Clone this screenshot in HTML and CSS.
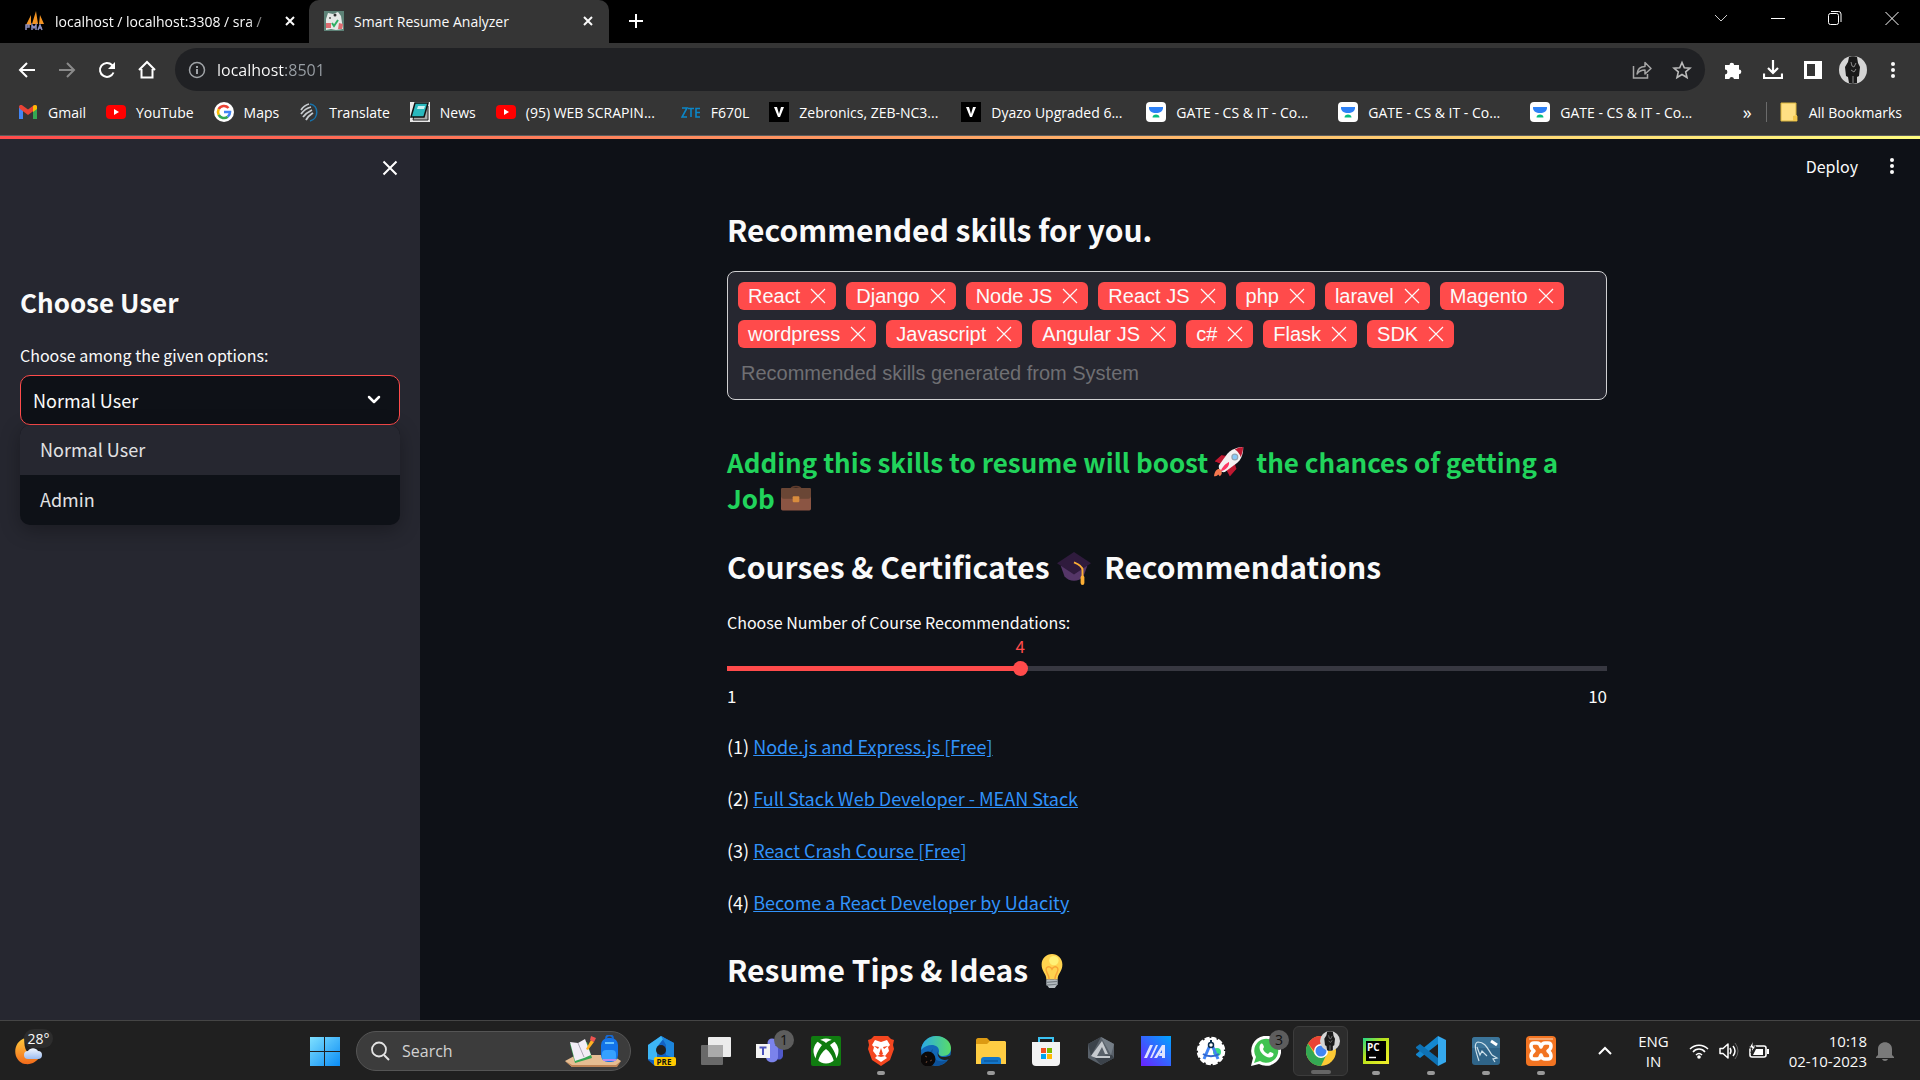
FILE: index.html
```html
<!DOCTYPE html>
<html lang="en">
<head>
<meta charset="utf-8">
<title>Smart Resume Analyzer</title>
<link rel="stylesheet" href="styles.css">
</head>
<body>
<svg class="defs" aria-hidden="true">
  <symbol id="x" viewBox="0 0 16 16"><path d="M1 1l14 14M15 1L1 15" fill="none" stroke="currentColor" stroke-width="1.200"/></symbol>
  <symbol id="dots" viewBox="0 0 20 20"><g fill="currentColor"><circle cx="10" cy="4" r="2"/><circle cx="10" cy="10" r="2"/><circle cx="10" cy="16" r="2"/></g></symbol>
  <symbol id="yt" viewBox="0 0 20 20"><rect y="3" width="20" height="14" rx="4" fill="#f00"/><path d="M8 7l5 3-5 3z" fill="#fff"/></symbol>
  <symbol id="vee" viewBox="0 0 20 20"><rect width="20" height="20" fill="#000"/><path d="M5 5h3l2 7 2-7h3l-4 10H9z" fill="#fff"/></symbol>
  <symbol id="gate" viewBox="0 0 20 20"><rect width="20" height="20" rx="4" fill="#fff"/><path d="M3 5h14v1c0 3-3 5-7 5S3 9 3 6z" fill="#2d81f7"/><path d="M6.500 15.500c0-2 1.500-3 3.500-3s3.500 1 3.500 3z" fill="#08bd80"/></symbol>
  <symbol id="photo" viewBox="0 0 28 28"><circle cx="14" cy="14" r="14" fill="#d5d5d5"/><path d="M10 1c2-1 6-1 8 0l1 6 2 4-1 9-2 1v6c-3 1-6 1-8 0l-1-6-2-1-1-9 3-5z" fill="#1a1a1a"/><path d="M12 6l1 4 2 1 2-4M12 14l3 2 2-3M14 20v7" stroke="#8a8a8a" fill="none"/></symbol>
</svg>

<header class="browser">
  <div class="tabs">
    <div class="tab">
      <svg class="i20" viewBox="0 0 20 20"><path d="M7 13L11 0l2 13zM1 14L6 4v10zM14 13l1-9 4 9z" fill="#f39322"/><path d="M1 19v-5h3v2H1M7 19v-5l2 3 2-3v5M13 19l2-5 2 5M14 17h3" stroke="#8d8fc0" stroke-width="1.500" fill="none"/></svg>
      <span class="tab-title fade">localhost / localhost:3308 / sra /</span>
      <button class="tab-close" aria-label="Close tab"><svg class="i12" viewBox="0 0 12 12"><path d="M2 2l8 8M10 2L2 10" stroke="currentColor" stroke-width="2"/></svg></button>
    </div>
    <div class="tab active">
      <svg class="i20" viewBox="0 0 20 20"><rect width="20" height="20" fill="#5d8277"/><path d="M4 2l5 1 5-2 3 4 2 13-7 1-5-1-5 1L2 8z" fill="#e6e9e7"/><path d="M2 12h5v5H2zM15 12l4 1-1 5h-4z" fill="#dd6b70"/><path d="M8 12l2 3 4-6" stroke="#2fae63" stroke-width="2" fill="none"/><circle cx="11" cy="4" r="1.500" fill="#333"/><circle cx="6" cy="7" r="1" fill="#555"/></svg>
      <span class="tab-title">Smart Resume Analyzer</span>
      <button class="tab-close" aria-label="Close tab"><svg class="i12" viewBox="0 0 12 12"><path d="M2 2l8 8M10 2L2 10" stroke="currentColor" stroke-width="2"/></svg></button>
    </div>
    <button class="newtab" aria-label="New tab"><svg class="i16" viewBox="0 0 16 16"><path d="M8 1v14M1 8h14" stroke="#fff" stroke-width="2"/></svg></button>
    <div class="window-controls">
      <button aria-label="Search tabs"><svg class="i16" viewBox="0 0 16 16"><path d="M2 5l6 6 6-6" stroke="#ccc" fill="none"/></svg></button>
      <button aria-label="Minimize"><svg class="i16" viewBox="0 0 16 16"><path d="M1 8.500h14" stroke="#fff"/></svg></button>
      <button aria-label="Restore"><svg class="i16" viewBox="0 0 16 16"><rect x="1.500" y="3.500" width="10" height="11" rx="2" stroke="#fff" fill="none"/><path d="M4 1.500h7.500a2.500 2.500 0 0 1 2.500 2.500v8" stroke="#fff" fill="none"/></svg></button>
      <button aria-label="Close"><svg class="i16" viewBox="0 0 16 16"><path d="M1.500 2l13 13M14.500 2l-13 13" stroke="#fff"/></svg></button>
    </div>
  </div>

  <div class="toolbar">
    <button class="tool" aria-label="Back"><svg class="i20" viewBox="0 0 20 20"><path d="M18 10H3M10 3l-7 7 7 7" stroke="#fff" stroke-width="2" fill="none"/></svg></button>
    <button class="tool" aria-label="Forward"><svg class="i20" viewBox="0 0 20 20"><path d="M2 10h15M10 3l7 7-7 7" stroke="#8a8a8a" stroke-width="2" fill="none"/></svg></button>
    <button class="tool" aria-label="Reload"><svg class="i20" viewBox="0 0 20 20"><path d="M16.500 12.500A7 7 0 1 1 15 5l1.500 1.500" stroke="#fff" stroke-width="2" fill="none"/><path d="M18 2v7h-7z" fill="#fff"/></svg></button>
    <button class="tool" aria-label="Home"><svg class="i20" viewBox="0 0 20 20"><path d="M2 10l8-8 8 8M4.500 9v8.500h11V9" stroke="#fff" stroke-width="2" fill="none"/></svg></button>
    <div class="omnibox">
      <svg class="i20" viewBox="0 0 20 20"><circle cx="10" cy="10" r="7.500" stroke="#a0a4a8" stroke-width="1.500" fill="none"/><path d="M10 9v5M10 6v2" stroke="#a0a4a8" stroke-width="2"/></svg>
      <input class="url" type="text" aria-label="Address" value="localhost:8501">
      <button class="tool" aria-label="Share"><svg class="i20" viewBox="0 0 20 20"><path d="M1.500 6v12h14v-4" stroke="#a6a6a6" stroke-width="1.500" fill="none"/><path d="M5 14c.5-5 3-7.500 8-7.500V2.500l6 6-6 5.500v-4c-4 0-6 1-8 4z" stroke="#a6a6a6" stroke-width="1.500" fill="none" stroke-linejoin="round"/></svg></button>
      <button class="tool" aria-label="Bookmark"><svg class="i20" viewBox="0 0 20 20"><path d="M10 2.500l2.300 5.200 5.700.5-4.300 3.700 1.300 5.600-5-3-5 3 1.300-5.600L2 8.200l5.700-.5z" stroke="#bbb" stroke-width="1.600" fill="none"/></svg></button>
    </div>
    <button class="tool" aria-label="Extensions"><svg class="i20" viewBox="0 0 20 20"><path d="M2 5h4.500a2.300 2.300 0 1 1 4.600 0H16v4.500a2.300 2.300 0 1 1 0 4.700V19h-5a2.400 2.400 0 0 0-4.700 0H2v-4.600a2.400 2.400 0 0 0 0-4.800z" fill="#fff"/></svg></button>
    <button class="tool" aria-label="Downloads"><svg class="i20" viewBox="0 0 20 20"><path d="M10 0v12M5 8l5 5 5-5M1 13.500V18h18v-4.500" stroke="#fff" stroke-width="2.200" fill="none"/></svg></button>
    <button class="tool" aria-label="Side panel"><svg class="i20" viewBox="0 0 20 20"><path d="M1 1h18v18H1zM4 4v12h8V4z" fill="#fff" fill-rule="evenodd"/></svg></button>
    <button class="tool" aria-label="Profile"><svg class="i28"><use href="#photo"/></svg></button>
    <button class="tool" aria-label="Menu"><svg class="i20"><use href="#dots"/></svg></button>
  </div>

  <nav class="bookmarks" aria-label="Bookmarks">
    <a href="#"><svg class="i20" viewBox="0 0 20 20"><path d="M1 17V5l4 3v9z" fill="#4285f4"/><path d="M15 17V8l4-3v12z" fill="#34a853"/><path d="M1 5c0-2 2-2.500 3.500-1.500L10 7.500l5.500-4C17 2.500 19 3 19 5l-1 2-8 6-8-6z" fill="#ea4335"/><path d="M15 4c2-2 4-1 4 1v2l-4 3z" fill="#fbbc04"/></svg>Gmail</a>
    <a href="#"><svg class="i20"><use href="#yt"/></svg>YouTube</a>
    <a href="#"><svg class="i20" viewBox="0 0 20 20"><circle cx="10" cy="10" r="10" fill="#fff"/><g fill="none" stroke-width="2.600"><path d="M14.500 6A6 6 0 0 0 4.700 7.200" stroke="#ea4335"/><path d="M4.700 7.200a6 6 0 0 0 0 5.600" stroke="#fbbc04"/><path d="M4.700 12.800a6 6 0 0 0 9 2" stroke="#34a853"/><path d="M13.700 14.800A6 6 0 0 0 16 10h-6" stroke="#4285f4"/></g></svg>Maps</a>
    <a href="#"><svg class="i20" viewBox="0 0 20 20"><path d="M11 2c9 1 9 15 0 17" stroke="#1673ad" stroke-width="1.500" fill="none"/><path d="M2 8c2-3 4-5 8-6M2 12c3-4 6-6 10-7M4 15c3-4 5-5 9-7M7 18c2-4 4-5 7-7" stroke="#c8ccd0" stroke-width="1.800" fill="none"/></svg>Translate</a>
    <a href="#"><svg class="i20" viewBox="0 0 20 20"><rect width="20" height="20" fill="#e9e9e9"/><path d="M6 4h12v14H3z" fill="#aaa" stroke="#222"/><path d="M5 1h13l-4 14H1z" fill="#29b8bd" stroke="#111" stroke-width="1.500"/><path d="M8 4h7l-1 3H7z" fill="#c9f2f2"/></svg>News</a>
    <a class="medium" href="#"><svg class="i20"><use href="#yt"/></svg>(95) WEB SCRAPIN...</a>
    <a href="#"><svg class="i20" viewBox="0 0 20 20"><path d="M1 6h5l-5 9h5M7 6.500h6M10 6.500V15M19 6.500h-4V15h4M15 10.500h4" stroke="#0b86c8" stroke-width="1.600" fill="none"/></svg>F670L</a>
    <a class="long" href="#"><svg class="i20"><use href="#vee"/></svg>Zebronics, ZEB-NC3...</a>
    <a class="medium" href="#"><svg class="i20"><use href="#vee"/></svg>Dyazo Upgraded 6...</a>
    <a class="long" href="#"><svg class="i20"><use href="#gate"/></svg>GATE - CS &amp; IT - Co...</a>
    <a class="long" href="#"><svg class="i20"><use href="#gate"/></svg>GATE - CS &amp; IT - Co...</a>
    <a class="long" href="#"><svg class="i20"><use href="#gate"/></svg>GATE - CS &amp; IT - Co...</a>
    <button class="more" aria-label="More bookmarks">»</button>
    <a class="all" href="#"><svg class="i20" viewBox="0 0 20 20"><path d="M2 1h15v12l1 1v5H2z" fill="#ffe083" stroke="#d9b43c"/><path d="M14 19v-5l4-1v6z" fill="#f3c74b"/></svg>All Bookmarks</a>
  </nav>
</header>

<div class="app">
  <aside class="sidebar">
    <button class="close-side" aria-label="Close sidebar"><svg class="i16" viewBox="0 0 16 16"><path d="M1.500 1.500l13 13M14.500 1.500l-13 13" stroke="#fff" stroke-width="2"/></svg></button>
    <h2>Choose User</h2>
    <label class="label" for="user">Choose among the given options:</label>
    <div class="select">
      <select id="user"><option>Normal User</option><option>Admin</option></select>
      <svg class="i16 caret" viewBox="0 0 16 16"><path d="M3 5l5 5 5-5" stroke="#fff" stroke-width="2.500" stroke-linecap="round" stroke-linejoin="round" fill="none"/></svg>
      <ul class="menu" role="listbox" aria-label="User">
        <li role="option" aria-selected="true">Normal User</li>
        <li role="option" aria-selected="false">Admin</li>
      </ul>
    </div>
  </aside>

  <main class="main">
    <div class="app-header">
      <button class="deploy">Deploy</button>
      <button class="kebab" aria-label="Main menu"><svg class="i20"><use href="#dots"/></svg></button>
    </div>
    <div class="content">
      <h3>Recommended skills for you.</h3>
      <div class="tags">
        <span class="tag">React<button aria-label="Remove React"><svg class="i16"><use href="#x"/></svg></button></span>
        <span class="tag">Django<button aria-label="Remove Django"><svg class="i16"><use href="#x"/></svg></button></span>
        <span class="tag">Node JS<button aria-label="Remove Node JS"><svg class="i16"><use href="#x"/></svg></button></span>
        <span class="tag">React JS<button aria-label="Remove React JS"><svg class="i16"><use href="#x"/></svg></button></span>
        <span class="tag">php<button aria-label="Remove php"><svg class="i16"><use href="#x"/></svg></button></span>
        <span class="tag">laravel<button aria-label="Remove laravel"><svg class="i16"><use href="#x"/></svg></button></span>
        <span class="tag">Magento<button aria-label="Remove Magento"><svg class="i16"><use href="#x"/></svg></button></span>
        <span class="tag">wordpress<button aria-label="Remove wordpress"><svg class="i16"><use href="#x"/></svg></button></span>
        <span class="tag">Javascript<button aria-label="Remove Javascript"><svg class="i16"><use href="#x"/></svg></button></span>
        <span class="tag">Angular JS<button aria-label="Remove Angular JS"><svg class="i16"><use href="#x"/></svg></button></span>
        <span class="tag">c#<button aria-label="Remove c#"><svg class="i16"><use href="#x"/></svg></button></span>
        <span class="tag">Flask<button aria-label="Remove Flask"><svg class="i16"><use href="#x"/></svg></button></span>
        <span class="tag">SDK<button aria-label="Remove SDK"><svg class="i16"><use href="#x"/></svg></button></span>
        <input class="tag-input" type="text" aria-label="Skills" placeholder="Recommended skills generated from System">
      </div>

      <h4 class="boost">Adding this skills to resume will boost<svg class="emoji" viewBox="0 0 36 36"><path d="M1 17l8-7 16 1 1 16-7 8s0-5-3-9-6-6-9-7-6-2-6-2z" fill="#a0041e"/><path d="M1 17l8-7 10 3-9 8zM19 35l8-9-4-9-8 11z" fill="#be1931"/><path d="M35 0S23 0 16 8L6 22s-1 3 1 6 6 2 6 2l15-11C36 12 35 0 35 0z" fill="#f4f1f2"/><path d="M35 0s-5 0-10 3c2 1 6 5 7 9 3-6 3-12 3-12z" fill="#be1931"/><circle cx="25" cy="12" r="3.500" fill="#88c9f9" stroke="#93a5b2" stroke-width="1.500"/><path d="M18 18s-7 3-10 11c6-1 11-6 10-11z" fill="#fc3663"/><path d="M8 27c-3-2-7 0-8 8 3 1 5-2 5-2l2 2c3-2 3-5 1-8z" fill="#f4784f"/></svg> the chances of getting a Job<svg class="emoji" viewBox="0 0 36 36"><path d="M12 8c0-5 12-5 12 0" stroke="#5e3b2c" stroke-width="2" fill="none"/><rect y="6" width="36" height="27" rx="2" fill="#8b5543"/><path d="M0 8c0-1 1-2 2-2h32c1 0 2 1 2 2v8c0 1-1 3-3 3H3c-2 0-3-2-3-3z" fill="#6a4635"/><rect x="14" y="16" width="8" height="7" rx="1" fill="#d98c3d"/></svg></h4>

      <h3>Courses &amp; Certificates<svg class="emoji big" viewBox="0 0 36 36"><path d="M4 16h28l-4 11c-5 6-15 6-20 0z" fill="#553668"/><path d="M18 1l18 12-18 12L0 13z" fill="#2f1b3d"/><path d="M18 12c5 2 9 4 9 8v7" stroke="#fdaf35" stroke-width="2" fill="none"/><rect x="25" y="26" width="4" height="10" rx="2" fill="#fdaf35"/></svg> Recommendations</h3>
      <label class="label" for="count">Choose Number of Course Recommendations:</label>
      <div class="slider">
        <output class="value" for="count">4</output>
        <input id="count" type="range" min="1" max="10" value="4">
        <div class="ticks"><span>1</span><span>10</span></div>
      </div>
      <p>(1) <a href="#">Node.js and Express.js [Free]</a></p>
      <p>(2) <a href="#">Full Stack Web Developer - MEAN Stack</a></p>
      <p>(3) <a href="#">React Crash Course [Free]</a></p>
      <p>(4) <a href="#">Become a React Developer by Udacity</a></p>
      <h3>Resume Tips &amp; Ideas<svg class="emoji big" viewBox="0 0 36 36"><path d="M29 11c0 8-5 9-5 16H12c0-7-5-8-5-16C7 5 12 0 18 0s11 5 11 11z" fill="#ffd34f"/><circle cx="20" cy="7" r="5" fill="#fff176"/><path d="M15 27c0-7-5-8-3-12 2-3 5-1 6 1 1-2 4-4 6-1 2 4-3 5-3 12" stroke="#f8a335" stroke-width="1.500" fill="none"/><path d="M12 27h12v5l-3 4h-6l-3-4z" fill="#b5bcc1"/><path d="M12 30l12-1M12 33l11-1" stroke="#777f85" stroke-width="1.200"/></svg></h3>
    </div>
  </main>
</div>

<footer class="taskbar">
  <button class="weather" aria-label="Weather">
    <svg class="i28" viewBox="0 0 28 28"><defs><linearGradient id="mn" x2="0" y2="1"><stop stop-color="#ffc93c"/><stop offset="1" stop-color="#f26a1b"/></linearGradient><linearGradient id="cl" x2="0" y2="1"><stop stop-color="#f2f7ff"/><stop offset="1" stop-color="#9cbdf0"/></linearGradient></defs><path d="M10 1C-3 5-3 24 10 27c7 1 12-3 14-6-9 1-17-9-14-20z" fill="url(#mn)"/><path d="M13 22a4 4 0 0 1 0-8 6 6 0 0 1 10 0 4 4 0 0 1 0 8z" fill="url(#cl)"/></svg>
    <span class="temp">28°</span>
  </button>
  <div class="apps">
    <button class="app-icon" aria-label="Start"><svg class="i30" viewBox="0 0 30 30"><defs><linearGradient id="wn" x2="1" y2="1"><stop stop-color="#7fe0ff"/><stop offset="1" stop-color="#0a8cf5"/></linearGradient></defs><path d="M0 1h14v14H0zM15 1h15v14H15zM0 16h14v14H0zM15 16h15v14H15z" fill="url(#wn)"/></svg></button>
    <div class="search">
      <svg class="i20" viewBox="0 0 20 20"><circle cx="9" cy="8.500" r="7" stroke="#e4e4e4" stroke-width="1.800" fill="none"/><path d="M14 14l5 5" stroke="#e4e4e4" stroke-width="2"/></svg>
      <input type="text" aria-label="Search" placeholder="Search">
      <svg class="study" viewBox="0 0 58 32"><path d="M1 26L12 20h36l9 6-5 6H8z" fill="#e5bd92"/><path d="M1 26l7 4h44l5-4-4 6H8z" fill="#bd8456"/><path d="M6 9l17-2 5 16-17 5z" fill="#35a653"/><path d="M6 7l8 1 7-4 6 16-7 3-9 3z" fill="#f2edf6"/><path d="M14 8l6 14" stroke="#aaa6b5"/><path d="M22 14l5-9 3 2-6 8z" fill="#ffb124"/><path d="M26 5l1-4 5 2-2 4z" fill="#ef5350"/><rect x="37" y="3" width="17" height="24" rx="7" fill="#1374ea"/><path d="M42 4c0-5 7-5 7 0" stroke="#1769d2" stroke-width="2" fill="none"/><path d="M41 8h9" stroke="#68c4ff" stroke-width="2"/><rect x="38" y="15" width="14" height="11" rx="4" fill="#36a1ff"/><path d="M39 25h13" stroke="#b48af2" stroke-width="2"/></svg>
    </div>
    <button class="app-icon" aria-label="Copilot preview"><svg class="i30" viewBox="0 0 30 30"><path d="M2 9L15 0l13 7v17l-9 6H9l-7-6z" fill="#1261c4"/><path d="M2 9L15 0l3 2-7 9v14L2 23z" fill="#3db6f5"/><path d="M15 0l13 7v15l-8-3V9z" fill="#1c85dc"/><circle cx="15" cy="14" r="5" fill="#202020"/><rect x="8" y="21" width="22" height="9" rx="2" fill="#ffc900"/></svg><span class="pre">PRE</span></button>
    <button class="app-icon" aria-label="Task view"><svg class="i30" viewBox="0 0 30 30"><rect x="7" y="1" width="23" height="20" rx="1" fill="#ececec"/><rect x="0" y="9" width="22" height="20" rx="1" fill="#777" fill-opacity=".85"/><path d="M7 9h15v12H7z" fill="#aaa"/></svg></button>
    <button class="app-icon" aria-label="Teams, 1 notification"><svg class="i30" viewBox="0 0 30 30"><circle cx="16" cy="7" r="4.500" fill="#7b83eb"/><path d="M21 10h6v10a4 4 0 0 1-6 3z" fill="#5059c9"/><path d="M10 10h12v11c0 7-12 7-12 0z" fill="#7b83eb"/><rect x="0" y="8" width="14" height="14" fill="#f4f4f4"/><path d="M3.500 11.500h7M7 11.500V19" stroke="#4b53bc" stroke-width="2"/></svg><span class="badge">1</span></button>
    <button class="app-icon" aria-label="Xbox"><svg class="i30" viewBox="0 0 30 30"><rect width="30" height="30" rx="2" fill="#107c10"/><circle cx="15" cy="15" r="12.500" fill="#fff"/><path d="M5 4c4-1 8 1 10 3 2-2 6-4 10-3-1 2-4 3-6 5 4 5 7 11 6 16l-2 1c-1-6-5-11-8-13-3 2-7 7-8 13l-2-1c-1-5 2-11 6-16-2-2-5-3-6-5z" fill="#107c10"/></svg></button>
    <button class="app-icon running" aria-label="Brave"><svg class="i30" viewBox="0 0 30 30"><path d="M8 0h14l3 3 3 1-1 5 1 4-4 11-9 6-9-6L2 13l1-4-1-5 3-1z" fill="#f4461f"/><path d="M9 4l6 2 6-2 3 5-2 2 1 4-4 5 2 2-6 4-6-4 2-2-4-5 1-4-2-2z" fill="#fff"/><path d="M8 10l5 1-1 2zM22 10l-5 1 1 2zM15 12l2 6-2 1-2-1zM11 20l4-2 4 2-4 1z" fill="#f4461f"/></svg></button>
    <button class="app-icon" aria-label="Edge"><svg class="i30" viewBox="0 0 30 30"><defs><linearGradient id="ed" x2="1"><stop stop-color="#29a9e8"/><stop offset="1" stop-color="#59dc68"/></linearGradient></defs><circle cx="15" cy="15" r="15" fill="#1268b8"/><path d="M0 14C1 5 8 0 15 0c9 0 15 6 15 12 0 5-3 8-8 8-4 0-5-2-4-4 1-8-11-10-18-2z" fill="url(#ed)"/><path d="M12 13c-3 8 4 15 14 11-2 3-6 6-11 6C7 28 6 17 12 13z" fill="#0d5199"/><path d="M17 15c-1 6 6 8 13 4l-2 4c-6 3-13-1-11-8z" fill="#202020"/><circle cx="7" cy="23" r="7.500" fill="#0b0808"/><path d="M4 20l2 1M9 25l2-1M5 27l1-2" stroke="#67412e"/></svg></button>
    <button class="app-icon running" aria-label="File Explorer"><svg class="i30" viewBox="0 0 30 30"><path d="M0 4c0-1 1-2 2-2h9l3 3h15v9H0z" fill="#dc9a13"/><path d="M0 8h11l3-3h15l1 1v22H0z" fill="#ffcd43"/><path d="M5 28v-4c0-2 1-3 3-3h14c2 0 3 1 3 3v4z" fill="#1376ca"/><path d="M8 25h14" stroke="#0a4c8b"/></svg></button>
    <button class="app-icon" aria-label="Microsoft Store"><svg class="i30" viewBox="0 0 30 30"><path d="M8 8V2h14v6" stroke="#3ac2f2" stroke-width="2" fill="none"/><path d="M1 6h28v20a4 4 0 0 1-4 4H5a4 4 0 0 1-4-4z" fill="#f3f3f3"/><path d="M10 12h5v5h-5z" fill="#f25022"/><path d="M16 12h5v5h-5z" fill="#7fba00"/><path d="M10 18h5v5h-5z" fill="#00a4ef"/><path d="M16 18h5v5h-5z" fill="#ffb900"/></svg></button>
    <button class="app-icon" aria-label="Armoury Crate"><svg class="i30" viewBox="0 0 30 30"><path d="M15 1l13 7v14l-13 7-13-7V8z" fill="#59616a"/><path d="M15 1L2 8l3 12zM15 29l13-7-2-3-18 2z" fill="#3c434b"/><path d="M15 1l13 7-3 11z" fill="#747d86"/><path d="M16 5L5 20l5 2h14v-2H11l5-9 3 7h3z" fill="#c5c9ce"/></svg></button>
    <button class="app-icon" aria-label="MyAsus"><svg class="i30" viewBox="0 0 30 30"><defs><linearGradient id="as" y1="1" x2="1" y2="0"><stop stop-color="#6a22ff"/><stop offset="1" stop-color="#00a5ff"/></linearGradient></defs><rect width="30" height="30" fill="url(#as)"/><path d="M3 22L9 9h3L6 22zM9 22l6-13h2l-6 13zM13 22l8-13h3l-8 13zM21 9h3v13h-3zM19 17h3v3h-4z" fill="#dfe3ff"/></svg></button>
    <button class="app-icon" aria-label="Android Studio"><svg class="i30" viewBox="0 0 30 30"><circle cx="15" cy="15" r="13" fill="#fff" stroke="#fff" stroke-width="2.500" stroke-dasharray="5 1.800"/><circle cx="21" cy="16" r="4" fill="#3ddc84"/><path d="M14 9L8 23M16 9l6 14" stroke="#4285f4" stroke-width="3"/><path d="M7 18c4 3 12 3 16 0" stroke="#3066cf" stroke-width="2" fill="none"/><circle cx="15" cy="9" r="2.500" fill="#fff" stroke="#0b2d4c" stroke-width="1.500"/><path d="M15 4v3" stroke="#0b2d4c" stroke-width="2"/></svg></button>
    <button class="app-icon" aria-label="WhatsApp, 3 notifications"><svg class="i30" viewBox="0 0 30 30"><path d="M0 30l2-8a15 15 0 1 1 6 6z" fill="#fff"/><path d="M3 27l2-6a12 12 0 1 1 4 4z" fill="#3fc351"/><path d="M9 9c2-3 3-1 4 2l-1 2c1 3 3 4 5 5l2-2c4 1 4 2 3 4-5 5-16-4-13-11z" fill="#fff"/></svg><span class="badge">3</span></button>
    <button class="app-icon current" aria-label="Chrome"><svg class="i30" viewBox="0 0 30 30"><circle cx="15" cy="15" r="15" fill="#fcc934"/><path d="M2 7.500A15 15 0 0 1 28 7.500H15l-5 10z" fill="#ea4335"/><path d="M2 7.500l7 11 11 1-5 10.500A15 15 0 0 1 2 7.500z" fill="#34a853"/><circle cx="15" cy="15" r="7" fill="#fff"/><circle cx="15" cy="15" r="5.500" fill="#4285f4"/></svg><svg class="badge-photo"><use href="#photo"/></svg></button>
    <button class="app-icon running" aria-label="PyCharm"><svg class="i30" viewBox="0 0 30 30"><defs><linearGradient id="pc" x2="1" y2="1"><stop stop-color="#21d789"/><stop offset=".4" stop-color="#b6e21c"/><stop offset="1" stop-color="#f5ee29"/></linearGradient></defs><rect x="2" y="2" width="26" height="26" fill="url(#pc)"/><rect x="5" y="5" width="20" height="20" fill="#000"/><path d="M8 21.500h7" stroke="#fff" stroke-width="1.500"/></svg><span class="pc">PC</span></button>
    <button class="app-icon running" aria-label="Visual Studio Code"><svg class="i30" viewBox="0 0 30 30"><path d="M22 0l8 4v22l-8 4z" fill="#35a9ee"/><path d="M22 0v8L4 22l-4-3v-1z" fill="#1487cf"/><path d="M22 30v-8L4 8l-4 3v1z" fill="#0e72b5"/></svg></button>
    <button class="app-icon running" aria-label="MySQL Workbench"><svg class="i30" viewBox="0 0 30 30"><rect x="1" y="1" width="28" height="28" rx="3" fill="#2f6488"/><path d="M1 4a3 3 0 0 1 3-3h22a3 3 0 0 1 3 3v8H1z" fill="#3b7499"/><path d="M8 25C5 16 2 7 7 6c8 0 10 8 14 13l5 3-4 1 2 3M6 11l3 8 2-4 5 5" stroke="#cde0ea" stroke-width="1.200" fill="none"/><path d="M20 5l6 4" stroke="#fff" stroke-width="3"/></svg></button>
    <button class="app-icon running" aria-label="XAMPP"><svg class="i30" viewBox="0 0 30 30"><rect width="30" height="30" rx="4" fill="#f27422"/><path d="M3 2h24v2H3z" fill="#f7a66e"/><path d="M8 7h3q3 0 4 4q1-4 4-4h3q3 0 3 3t-3 5q3 2 3 5t-3 3h-3q-3 0-4-4q-1 4-4 4H8q-3 0-3-3t3-5q-3-2-3-5t3-3z" stroke="#fff" stroke-width="3.500" fill="none" stroke-linejoin="round"/></svg></button>
  </div>
  <div class="tray">
    <button aria-label="Hidden icons"><svg class="i16" viewBox="0 0 16 16"><path d="M2 11l6-6 6 6" stroke="#fff" stroke-width="2" fill="none"/></svg></button>
    <button class="lang">ENG<br>IN</button>
    <button class="status" aria-label="Network, sound, battery">
      <svg class="i20" viewBox="0 0 20 20"><g fill="none" stroke="#fff" stroke-width="1.500"><path d="M1 8c5-5 13-5 18 0M4 11c3-4 9-4 12 0M7 14c2-2 4-2 6 0"/></g><circle cx="10" cy="16" r="1.800" fill="#fff"/></svg>
      <svg class="i20" viewBox="0 0 20 20"><path d="M1 7.500h3L9 3v14l-5-4.500H1z" fill="none" stroke="#fff" stroke-width="1.500" stroke-linejoin="round"/><path d="M11 7q2 3 0 6M14 5q4 5 0 10" fill="none" stroke="#fff" stroke-width="1.500"/><path d="M16 2q6 8 0 16" stroke="#666" fill="none"/></svg>
      <svg class="i20" viewBox="0 0 20 20"><rect x="1" y="5" width="16" height="11" rx="2" fill="none" stroke="#fff" stroke-width="1.600"/><path d="M7 8h7v6H4zM18 8h2v5h-2z" fill="#fff"/><path d="M4 0L0 7h3l-1 5 5-7H4z" fill="#fff" stroke="#202020"/></svg>
    </button>
    <time class="clock" datetime="2023-10-02T10:18">10:18<br>02-10-2023</time>
    <button aria-label="Notifications"><svg class="i20" viewBox="0 0 20 20"><path d="M3 14V8c0-9 14-9 14 0v6l2 2v1H1v-1z" fill="#7a7a7a"/><path d="M7 18h6c-1 2.500-5 2.500-6 0z" fill="#7a7a7a"/></svg></button>
  </div>
</footer>
</body>
</html>
```
FILE: styles.css
```css
* { box-sizing: border-box; }
:root {
  --sans: "Noto Sans CJK JP", "Noto Sans CJK SC", sans-serif;
  --ui: "Open Sans", "Noto Sans", sans-serif;
  --red: #ff4b4b;
  --panel: #262730;
  --bg: #0e1117;
}
body {
  margin: 0;
  height: 100vh;
  display: flex;
  flex-direction: column;
  overflow: hidden;
  background: var(--bg);
  color: #fafafa;
  font-family: var(--ui);
  font-size: 14px;
}
button {
  display: inline-flex;
  align-items: center;
  justify-content: center;
  padding: 0;
  border: 0;
  background: none;
  color: inherit;
  font: inherit;
}
input, select { font: inherit; color: inherit; outline: 0; border: 0; background: none; padding: 0; margin: 0; min-width: 0; }
svg { flex: none; display: block; }
.defs { position: absolute; width: 0; height: 0; }
.i12 { width: 12px; height: 12px; }
.i16 { width: 16px; height: 16px; }
.i20 { width: 20px; height: 20px; }
.i28 { width: 28px; height: 28px; }
.i30 { width: 30px; height: 30px; }

/* browser chrome */
.browser { flex: none; background: #353535; border-bottom: 1px solid #5c5c5c; }
.tabs { display: flex; height: 43px; background: #000; }
.tab { display: flex; align-items: center; width: 300px; padding: 0 15px 1px; gap: 10px; }
.tab:first-child { width: 309px; padding: 0 13px 1px 25px; }
.tab.active { background: #353535; border-radius: 10px 10px 0 0; }
.tab-title { flex: 1; white-space: nowrap; overflow: hidden; }
.tab-title.fade { -webkit-mask-image: linear-gradient(90deg, #000 88%, transparent); mask-image: linear-gradient(90deg, #000 88%, transparent); }
.newtab { width: 54px; padding-bottom: 1px; }
.window-controls { display: flex; margin-left: auto; height: 36px; }
.window-controls button { width: 57px; }

.toolbar { display: flex; align-items: center; padding: 5px 7px 0; }
.tool { width: 40px; height: 40px; }
.omnibox {
  flex: 1;
  display: flex;
  align-items: center;
  height: 43px;
  margin: 0 8px;
  padding: 0 3px 0 12px;
  border-radius: 22px;
  background: #202124;
}
.url {
  flex: 1;
  margin-left: 10px;
  height: 30px;
  font-size: 16px;
  color: transparent;
  background: linear-gradient(90deg, #fff 68px, #9aa0a6 68px);
  -webkit-background-clip: text;
  background-clip: text;
}
.bookmarks { display: flex; align-items: center; gap: 20px; height: 44px; padding: 0 18px 2px; white-space: nowrap; }
.bookmarks a { display: flex; align-items: center; gap: 10px; color: #fff; text-decoration: none; }
.bookmarks .medium { min-width: 165px; }
.bookmarks .long { min-width: 172px; }
.more { margin-left: auto; font-size: 18px; }
.bookmarks .all { border-left: 1px solid #6b6b6b; padding-left: 12px; margin-left: -6px; }

/* app */
.app {
  flex: 1;
  min-height: 0;
  display: flex;
  border-top: 3px solid;
  border-image: linear-gradient(90deg, #ff4b4b, #fffd80) 1;
  font-family: var(--sans);
  font-size: 18px;
}
.sidebar { width: 420px; flex: none; padding: 14px 20px; background: var(--panel); }
.close-side { display: flex; width: 20px; height: 30px; margin-left: auto; }
h2, h3, h4, p { margin: 0; }
h2 { margin-top: 100px; font-size: 26px; line-height: 38px; font-weight: 600; }
.label { display: block; font-size: 16px; line-height: 24px; }
.sidebar .label { margin-top: 22px; }
.select { position: relative; margin-top: 8px; }
.select select {
  display: block;
  width: 100%;
  height: 50px;
  padding: 0 12px;
  border: 1px solid var(--red);
  border-radius: 10px;
  background: var(--bg);
  appearance: none;
}
.caret { position: absolute; right: 18px; top: 17px; pointer-events: none; }
.menu {
  position: absolute;
  top: 100%;
  left: 0;
  right: 0;
  margin: 0;
  padding: 0;
  list-style: none;
  border-radius: 10px;
  overflow: hidden;
  background: var(--bg);
  box-shadow: 0 5px 20px rgba(0, 0, 0, .3);
  color: #e2e2e4;
}
.menu li { height: 50px; line-height: 48px; padding: 0 20px; }
.menu [aria-selected="true"] { background: var(--panel); }

.main { flex: 1; min-width: 0; overflow: hidden; padding-right: 6px; }
.app-header { display: flex; justify-content: flex-end; align-items: center; height: 54px; padding-right: 2px; margin-bottom: 15px; font-size: 16px; }
.kebab { width: 40px; height: 40px; margin-left: 14px; }
.content { max-width: 880px; margin: 0 auto; }
h3 { font-size: 30px; line-height: 42px; font-weight: 600; }
.tags {
  display: flex;
  flex-wrap: wrap;
  gap: 10px;
  margin-top: 21px;
  padding: 10px;
  border: 1px solid #d0d0d2;
  border-radius: 8px;
  background: var(--panel);
  font-family: "Liberation Sans", Arial, sans-serif;
  font-size: 20px;
}
.tag { display: flex; align-items: center; gap: 10px; height: 28px; padding: 0 10px; border-radius: 6px; background: var(--red); }
.tag-input { flex: 1 0 100%; height: 31px; padding: 0 3px; }
.tag-input::placeholder { color: #6f6f73; opacity: 1; }
.boost { margin-top: 44px; font-size: 26px; line-height: 36px; font-weight: 600; color: #21d45c; }
.boost + h3 { margin-top: 29px; }
.emoji { display: inline-block; width: 30px; height: 30px; margin: 0 6px; vertical-align: -4px; }
.emoji.big { width: 34px; height: 34px; margin: 0 7px; vertical-align: -6px; }
.content .label { margin-top: 23px; }
.slider { margin-bottom: 23px; font-size: 17px; line-height: 24px; }
.value { display: block; width: 20px; margin-left: calc(33.333% - 10px); text-align: center; color: var(--red); }
.slider input {
  display: block;
  width: calc(100% + 14px);
  height: 16px;
  margin: 2px -7px 8px;
  appearance: none;
  background: linear-gradient(90deg, var(--red) 33.333%, #373841 33.333%) center / calc(100% - 14px) 5px no-repeat;
}
.slider input::-webkit-slider-thumb { appearance: none; width: 15px; height: 15px; border-radius: 50%; background: var(--red); }
.ticks { display: flex; justify-content: space-between; }
.content p { margin-bottom: 22px; line-height: 30px; }
.content a { color: #3193fb; }
p + h3 { margin-top: 31px; }

/* taskbar */
.taskbar { flex: none; display: flex; align-items: center; height: 60px; border-top: 1px solid #454545; background: #202020; }
.weather { position: relative; flex: none; width: 297px; height: 100%; padding-left: 15px; justify-content: flex-start; }
.temp { position: absolute; left: 24px; top: 8px; width: 29px; border-radius: 10px; background: #2d2d2d; text-align: center; line-height: 19px; }
.apps { display: flex; align-items: center; }
.app-icon { position: relative; width: 55px; height: 50px; }
.search {
  display: flex;
  align-items: center;
  width: 275px;
  height: 40px;
  margin: 0 2px 0 4px;
  padding: 0 8px 0 13px;
  border: 1px solid #555;
  border-radius: 20px;
  background: #3c3c3c;
}
.search input { flex: 1; margin-left: 12px; font-size: 16px; }
.search input::placeholder { color: #d2d2d2; opacity: 1; }
.study { width: 58px; height: 32px; }
.badge { position: absolute; right: 4px; top: 4px; width: 20px; height: 20px; border-radius: 50%; background: #5d5d5d; color: #111; line-height: 20px; }
.badge-photo { position: absolute; right: 7px; top: 4px; width: 20px; height: 20px; }
.pre { position: absolute; left: 20px; top: 31px; width: 22px; color: #111; font-size: 8px; font-weight: 700; line-height: 9px; }
.pc { position: absolute; left: 19px; top: 15px; font-size: 10px; font-weight: 700; line-height: 12px; }
.running::after, .current::after { content: ""; position: absolute; bottom: 1px; left: 24px; width: 8px; height: 4px; border-radius: 2px; background: #999; }
.current { border: 1px solid #3c3c3c; border-radius: 6px; background: #2c2c2c; }
.current::after { left: 17px; width: 20px; background: #666; }
.tray { display: flex; align-items: center; margin-left: auto; padding-right: 25px; font-size: 15px; line-height: 20px; text-align: center; }
.lang { margin-left: 25px; }
.status { gap: 10px; margin: 0 20px; }
.clock { margin-right: 8px; text-align: right; }
```
